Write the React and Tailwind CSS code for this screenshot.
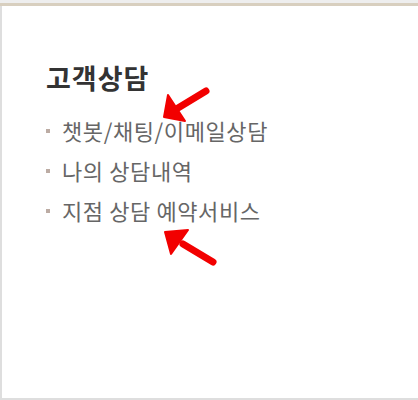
import React from "react";

const items = ["챗봇/채팅/이메일상담", "나의 상담내역", "지점 상담 예약서비스"];

// red pointer arrows drawn over the list
const Arrows = () => (
  <svg className="absolute left-0 top-0 pointer-events-none" width="418" height="400">
    <g fill="#f20000" stroke="#f20000" strokeLinecap="round" strokeLinejoin="round">
      <line x1="206" y1="91" x2="178" y2="108" strokeWidth="7" />
      <polygon points="164,117 168,95 185,121" strokeWidth="2" />
      <line x1="213" y1="262" x2="183" y2="244" strokeWidth="7" />
      <polygon points="165,232 188,230 171,254" strokeWidth="2" />
    </g>
  </svg>
);

export default function App() {
  return (
    <div className="relative w-[418px] h-[400px] bg-white overflow-hidden">
      <div className="h-[3px] bg-[#eeeeee]" />
      <div className="h-[3px] bg-[#d8cfbf]" />
      <div className="h-[394px] border-l-2 border-b-2 border-[#dedede] font-['Noto_Sans_CJK_KR','Noto_Sans',sans-serif]">
        <div className="pl-[44px] pt-[56px]">
          <h2 className="text-[27px] font-bold leading-[31px] text-[#333333] tracking-[1px]">
            고객상담
          </h2>
          <ul className="mt-[24px] flex flex-col gap-[13px]">
            {items.map((t) => (
              <li key={t} className="flex items-center gap-[12px] text-[22px] leading-[27px] text-[#666666] tracking-[0.6px]">
                <span className="w-[4px] h-[4px] bg-[#bcaca4]" />
                {t}
              </li>
            ))}
          </ul>
        </div>
      </div>
      <Arrows />
    </div>
  );
}
